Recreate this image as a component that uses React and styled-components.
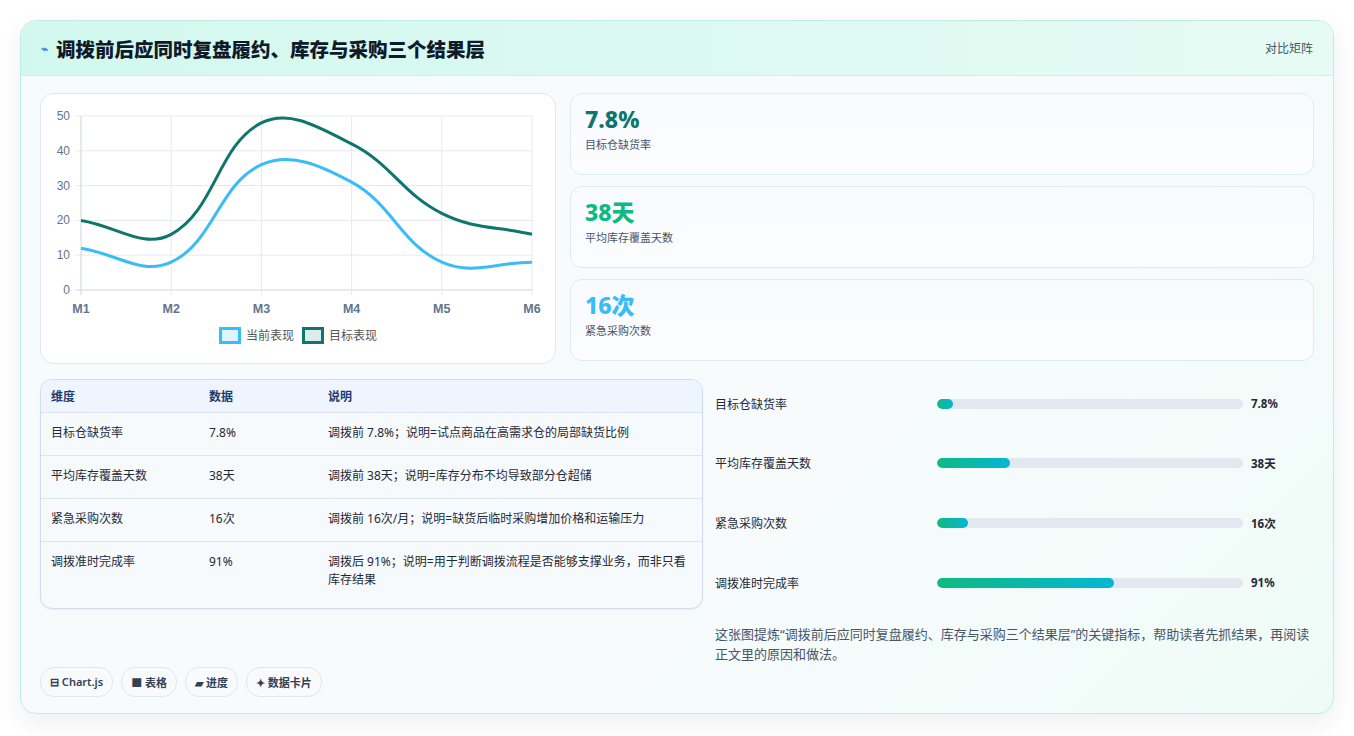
import React from "react";
import styled, { createGlobalStyle } from "styled-components";

const G = createGlobalStyle`
  body{margin:0;background:#fff;font-family:"Noto Sans","Noto Sans CJK SC",sans-serif;}
`;
const Page = styled.div`padding:20px 20px 21px 20px;`;
const Card = styled.div`
  border:1px solid #bfeee0;border-radius:16px;overflow:hidden;
  background:linear-gradient(135deg,#f6fbfd 0%,#f8fbfc 60%,#eefcf7 100%);
  box-shadow:0 8px 24px rgba(15,40,60,.08);
`;
const Header = styled.div`
  height:54px;display:flex;align-items:center;justify-content:space-between;
  padding:0 20px;background:linear-gradient(90deg,#d2f8ee,#e6fbf4);
  border-bottom:1px solid #d4efe8;
`;
const Title = styled.h1`margin:0;font-size:19.5px;font-weight:800;color:#0f1a2b;display:flex;align-items:center;gap:8px;`;
const Tag = styled.span`font-size:12px;color:#475569;`;
const Body = styled.div`padding:17px 19px 16px 19px;display:flex;flex-direction:column;gap:15px;`;
const Row = styled.div`display:grid;grid-template-columns:${p => p.cols};gap:${p => p.gap}px;`;
const Panel = styled.div`background:#fff;border:1px solid #dfe8ef;border-radius:14px;height:269px;position:relative;`;
const Stats = styled.div`display:flex;flex-direction:column;gap:11px;`;
const Stat = styled.div`height:82px;box-sizing:border-box;border:1px solid #d9eef0;border-radius:12px;background:linear-gradient(180deg,#f8fafe,#fbfdfe);padding:10px 14px;`;
const Big = styled.div`font-size:23px;font-weight:800;color:${p => p.c};line-height:30px;`;
const Small = styled.div`font-size:11px;color:#475569;margin-top:2px;`;
const Table = styled.div`border:1px solid #cfdcea;border-radius:12px;overflow:hidden;background:#f7fafc;height:228px;box-shadow:0 1px 2px rgba(0,0,0,.05);`;
const TR = styled.div`display:grid;grid-template-columns:158px 119px 1fr;padding:0 10px;
  min-height:${p => p.h}px;align-items:start;padding-top:${p => p.pt}px;box-sizing:border-box;
  font-size:12px;color:${p => p.head ? "#1e3a6e" : "#1f2937"};background:${p => p.head ? "#eef5ff" : "transparent"};
  font-weight:${p => p.head ? 600 : 400};border-bottom:${p => p.last ? "none" : "1px solid #dde5ee"};line-height:18px;`;
const Right = styled.div`display:flex;flex-direction:column;margin-top:-5px;`;
const BarRow = styled.div`display:grid;grid-template-columns:214px 306px auto;column-gap:8px;align-items:center;height:59.6px;font-size:12px;color:#1f2937;`;
const Track = styled.div`height:10px;border-radius:5px;background:#e2e8f0;overflow:hidden;`;
const Fill = styled.div`height:100%;border-radius:5px;background:linear-gradient(90deg,#10b981,#06b6d4);`;
const Val = styled.span`font-weight:700;font-size:11.5px;`;
const Note = styled.p`margin:12px 0 0;font-size:13px;line-height:20px;color:#475569;`;
const Chips = styled.div`display:flex;gap:8px;margin-top:58px;`;
const Chip = styled.span`font-size:11px;font-weight:600;color:#334155;border:1px solid #dfe6ee;border-radius:14px;padding:6px 9px;background:#f8fafc;`;
const Legend = styled.div`position:absolute;left:0;right:0;top:232px;display:flex;justify-content:center;gap:8px;font-size:12px;color:#555;`;
const LegItem = styled.span`display:flex;align-items:center;gap:5px;`;
const Box = styled.i`width:16px;height:11px;border:3px solid ${p => p.c};background:${p => p.bg};`;

function path(vals, x0, w, y0, h) {
  const pts = vals.map((v, i) => [x0 + (w * i) / (vals.length - 1), y0 + h - (v / 50) * h]);
  const t = 0.4;
  let d = `M${pts[0][0]},${pts[0][1]}`;
  const cps = pts.map((p, i) => {
    const prev = pts[i - 1] || p, next = pts[i + 1] || p;
    const d01 = Math.hypot(p[0] - prev[0], p[1] - prev[1]);
    const d12 = Math.hypot(next[0] - p[0], next[1] - p[1]);
    let s01 = d01 / (d01 + d12 || 1), s12 = d12 / (d01 + d12 || 1);
    const fa = t * s01, fb = t * s12;
    return { p: [p[0] - fa * (next[0] - prev[0]), p[1] - fa * (next[1] - prev[1])], n: [p[0] + fb * (next[0] - prev[0]), p[1] + fb * (next[1] - prev[1])] };
  });
  for (let i = 1; i < pts.length; i++) d += ` C${cps[i - 1].n[0]},${cps[i - 1].n[1]} ${cps[i].p[0]},${cps[i].p[1]} ${pts[i][0]},${pts[i][1]}`;
  return d;
}

function Chart() {
  const x0 = 40, w = 451, y0 = 22, h = 174;
  return (
    <svg width="516" height="230" style={{ position: "absolute", left: 0, top: 0 }}>
      {[0, 1, 2, 3, 4, 5].map(i => {
        const y = y0 + h - (i * h) / 5;
        return <g key={i}><line x1={x0 - 5} x2={x0 + w} y1={y} y2={y} stroke={i ? "#e5e9f0" : "#cbd5e1"} />
          <text x={x0 - 11} y={y + 4} textAnchor="end" fontSize="12" fill="#64748b" fontFamily="Liberation Sans">{i * 10}</text></g>;
      })}
      {[0, 1, 2, 3, 4, 5].map(i => {
        const x = x0 + (w * i) / 5;
        return <g key={i}><line x1={x} x2={x} y1={y0} y2={y0 + h + 5} stroke={i ? "#e5e9f0" : "#cbd5e1"} />
          <text x={x} y={y0 + h + 23} textAnchor="middle" fontSize="12.5" fontWeight="700" fill="#64748b" fontFamily="Liberation Sans">M{i + 1}</text></g>;
      })}
      <path d={path([12, 8, 36, 31, 8, 8], x0, w, y0, h)} fill="none" stroke="#38bdf8" strokeWidth="3" />
      <path d={path([20, 16, 48, 42, 22, 16], x0, w, y0, h)} fill="none" stroke="#0f766e" strokeWidth="3" />
    </svg>
  );
}

const rows = [
  ["目标仓缺货率", "7.8%", "调拨前 7.8%；说明=试点商品在高需求仓的局部缺货比例"],
  ["平均库存覆盖天数", "38天", "调拨前 38天；说明=库存分布不均导致部分仓超储"],
  ["紧急采购次数", "16次", "调拨前 16次/月；说明=缺货后临时采购增加价格和运输压力"],
  ["调拨准时完成率", "91%", "调拨后 91%；说明=用于判断调拨流程是否能够支撑业务，而非只看库存结果"],
];
const bars = [["目标仓缺货率", "7.8%", 5.2], ["平均库存覆盖天数", "38天", 24], ["紧急采购次数", "16次", 10], ["调拨准时完成率", "91%", 58]];

export default function App() {
  return (
    <Page>
      <G />
      <Card>
        <Header>
          <Title><span style={{ color: "#3b82f6", fontSize: 12 }}>⌁</span>调拨前后应同时复盘履约、库存与采购三个结果层</Title>
          <Tag>对比矩阵</Tag>
        </Header>
        <Body>
          <Row cols="516px 1fr" gap={14}>
            <Panel>
              <Chart />
              <Legend>
                <LegItem><Box c="#38bdf8" bg="#e0f4fe" />当前表现</LegItem>
                <LegItem><Box c="#0f766e" bg="#dcecea" />目标表现</LegItem>
              </Legend>
            </Panel>
            <Stats>
              <Stat><Big c="#0f766e">7.8%</Big><Small>目标仓缺货率</Small></Stat>
              <Stat><Big c="#10b981">38天</Big><Small>平均库存覆盖天数</Small></Stat>
              <Stat><Big c="#38bdf8">16次</Big><Small>紧急采购次数</Small></Stat>
            </Stats>
          </Row>
          <Row cols="663px 1fr" gap={12}>
            <div>
              <Table>
                <TR head h={33} pt={8}><span>维度</span><span>数据</span><span>说明</span></TR>
                {rows.map((r, i) => (
                  <TR key={i} h={i === 3 ? 65 : 43} pt={11} last={i === 3}><span>{r[0]}</span><span>{r[1]}</span><span>{r[2]}</span></TR>
                ))}
              </Table>
              <Chips>
                <Chip>⊟ Chart.js</Chip><Chip>■ 表格</Chip><Chip>▰ 进度</Chip><Chip>✦ 数据卡片</Chip>
              </Chips>
            </div>
            <Right>
              {bars.map((b, i) => (
                <BarRow key={i}><span>{b[0]}</span><Track><Fill style={{ width: b[2] + "%" }} /></Track><Val>{b[1]}</Val></BarRow>
              ))}
              <Note>这张图提炼“调拨前后应同时复盘履约、库存与采购三个结果层”的关键指标，帮助读者先抓结果，再阅读正文里的原因和做法。</Note>
            </Right>
          </Row>
        </Body>
      </Card>
    </Page>
  );
}
